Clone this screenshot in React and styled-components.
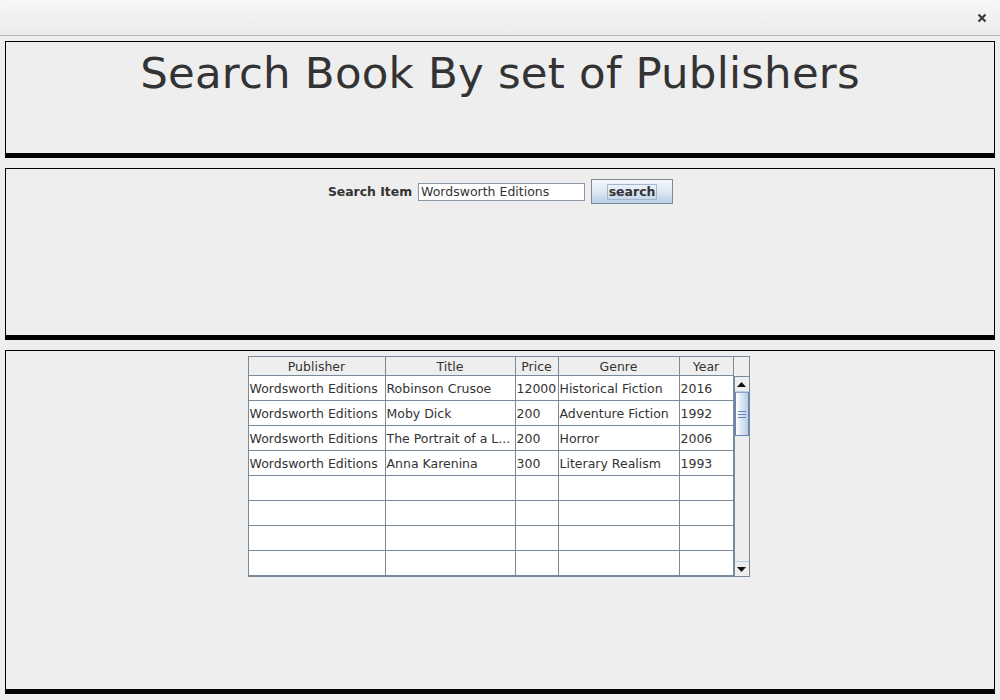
import React from "react";
import styled, { createGlobalStyle } from "styled-components";

const GlobalStyle = createGlobalStyle`
  html, body {
    margin: 0;
    padding: 0;
    background: #eeeeee;
  }
  body {
    font-family: "DejaVu Sans", "Liberation Sans", sans-serif;
    color: #333333;
  }
`;

const columns = [
  { label: "Publisher", width: 137 },
  { label: "Title", width: 130 },
  { label: "Price", width: 43 },
  { label: "Genre", width: 121 },
  { label: "Year", width: 54 },
];

const books = [
  ["Wordsworth Editions", "Robinson Crusoe", "12000", "Historical Fiction", "2016"],
  ["Wordsworth Editions", "Moby Dick", "200", "Adventure Fiction", "1992"],
  ["Wordsworth Editions", "The Portrait of a L...", "200", "Horror", "2006"],
  ["Wordsworth Editions", "Anna Karenina", "300", "Literary Realism", "1993"],
  ["", "", "", "", ""],
  ["", "", "", "", ""],
  ["", "", "", "", ""],
  ["", "", "", "", ""],
];

const Window = styled.div`
  width: 1000px;
  height: 700px;
  display: flex;
  flex-direction: column;
  background: #eeeeee;
  overflow: hidden;
`;

const TitleBar = styled.div`
  height: 35px;
  flex: none;
  border-bottom: 1px solid #b9b9b9;
  background: linear-gradient(#f7f7f7, #ebebeb);
  border-radius: 4px 4px 0 0;
  display: flex;
  align-items: center;
  justify-content: flex-end;
  padding-right: 13px;
`;

const Content = styled.div`
  flex: 1;
  display: flex;
  flex-direction: column;
  gap: 10px;
  padding: 5px 5px 0 5px;
`;

const Panel = styled.div`
  height: ${({ $h }) => $h}px;
  box-sizing: border-box;
  border: 1px solid #000;
  border-bottom: 5px solid #000;
  display: flex;
  flex-direction: column;
  align-items: center;
  padding-top: ${({ $pt }) => $pt || 0}px;
`;

const Heading = styled.h1`
  margin: 0;
  font-weight: normal;
  font-size: 43.5px;
  line-height: 60px;
  color: #333333;
  letter-spacing: 0.2px;
`;

const SearchRow = styled.div`
  display: flex;
  align-items: center;
  margin-left: 1px;
`;

const Label = styled.span`
  font-weight: bold;
  font-size: 12.4px;
  color: #333333;
  margin-right: 6px;
`;

const Field = styled.div`
  width: 163px;
  height: 16px;
  border: 1px solid #8a97a5;
  background: #fff;
  font-size: 12.5px;
  line-height: 16px;
  padding-left: 2px;
  box-sizing: content-box;
  margin-right: 6px;
`;

const Button = styled.div`
  width: 80px;
  height: 23px;
  border: 1px solid #7a8a99;
  background: linear-gradient(#f4f8fc, #dde8f3 50%, #b8cfe5);
  display: flex;
  align-items: center;
  justify-content: center;
`;

const ButtonText = styled.span`
  font-weight: bold;
  font-size: 12.5px;
  color: #333333;
  border: 1px solid #a3b8cc;
  padding: 0 1px;
  line-height: 14px;
`;

const Scroll = styled.div`
  margin-top: 5px;
  margin-right: 3px;
  display: flex;
  border: 1px solid #7a8a99;
  border-right: none;
  background: #fff;
`;

const Table = styled.div`
  display: flex;
  flex-direction: column;
`;

const Row = styled.div`
  display: flex;
`;

const HeadCell = styled.div`
  width: ${({ $w }) => $w}px;
  height: 19px;
  box-sizing: border-box;
  border-right: 1px solid #7a8a99;
  border-bottom: 1px solid #7a8a99;
  background: #eeeeee;
  font-size: 12.5px;
  line-height: 20px;
  text-align: center;
  color: #333333;
`;

const Cell = styled.div`
  width: ${({ $w }) => $w}px;
  height: 25px;
  box-sizing: border-box;
  border-right: 1px solid #7a8a99;
  border-bottom: 1px solid #7a8a99;
  font-size: 12.5px;
  line-height: 26px;
  padding-left: 1px;
  white-space: nowrap;
  overflow: hidden;
  color: #333333;
`;

const ScrollCol = styled.div`
  width: 16px;
  display: flex;
  flex-direction: column;
`;

const Corner = styled.div`
  height: 19px;
  background: #eeeeee;
  border-right: 1px solid #7a8a99;
  box-sizing: border-box;
`;

const Track = styled.div`
  flex: 1;
  display: flex;
  flex-direction: column;
  background: #eeeeee;
  border-left: 1px solid #7a8a99;
  border-right: 1px solid #7a8a99;
  border-top: 1px solid #7a8a99;
`;

const ArrowButton = styled.div`
  height: 14px;
  flex: none;
  background: #eeeeee;
  border-top: ${({ $down }) => ($down ? "1px solid #b8cfe5" : "none")};
  border-bottom: ${({ $down }) => ($down ? "none" : "1px solid #b8cfe5")};
  display: flex;
  align-items: center;
  justify-content: center;
`;

const Thumb = styled.div`
  height: 44px;
  flex: none;
  border: 1px solid #6382bf;
  border-top-color: #8da3c6;
  background: linear-gradient(90deg, #ffffff, #dde8f3 45%, #b8cfe5);
  display: flex;
  flex-direction: column;
  align-items: center;
  justify-content: center;
  gap: 2px;
  box-sizing: border-box;
`;

const Grip = styled.div`
  width: 8px;
  height: 1px;
  background: #6382bf;
`;

const Spacer = styled.div`
  flex: 1;
`;

const Arrow = ({ down }) => (
  <svg width="9" height="5" viewBox="0 0 9 5">
    <path d={down ? "M0 0 H9 L4.5 5 Z" : "M0 5 H9 L4.5 0 Z"} fill="#111" />
  </svg>
);

export default function App() {
  return (
    <>
      <GlobalStyle />
      <Window>
        <TitleBar>
          <svg width="10" height="10" viewBox="0 0 10 10">
            <path d="M1.5 1.5 L8.5 8.5 M8.5 1.5 L1.5 8.5" stroke="#3a3a3a" strokeWidth="2.2" />
          </svg>
        </TitleBar>
        <Content>
          <Panel $h={117} $pt={1}>
            <Heading>Search Book By set of Publishers</Heading>
          </Panel>
          <Panel $h={172} $pt={10}>
            <SearchRow>
              <Label>Search Item</Label>
              <Field>Wordsworth Editions</Field>
              <Button>
                <ButtonText>search</ButtonText>
              </Button>
            </SearchRow>
          </Panel>
          <Panel $h={344}>
            <Scroll>
              <Table>
                <Row>
                  {columns.map((c) => (
                    <HeadCell key={c.label} $w={c.width}>
                      {c.label}
                    </HeadCell>
                  ))}
                </Row>
                {books.map((b, i) => (
                  <Row key={i}>
                    {b.map((v, j) => (
                      <Cell key={j} $w={columns[j].width}>
                        {v}
                      </Cell>
                    ))}
                  </Row>
                ))}
              </Table>
              <ScrollCol>
                <Corner />
                <Track>
                  <ArrowButton>
                    <Arrow />
                  </ArrowButton>
                  <Thumb>
                    <Grip />
                    <Grip />
                    <Grip />
                  </Thumb>
                  <Spacer />
                  <ArrowButton $down>
                    <Arrow down />
                  </ArrowButton>
                </Track>
              </ScrollCol>
            </Scroll>
          </Panel>
        </Content>
      </Window>
    </>
  );
}
